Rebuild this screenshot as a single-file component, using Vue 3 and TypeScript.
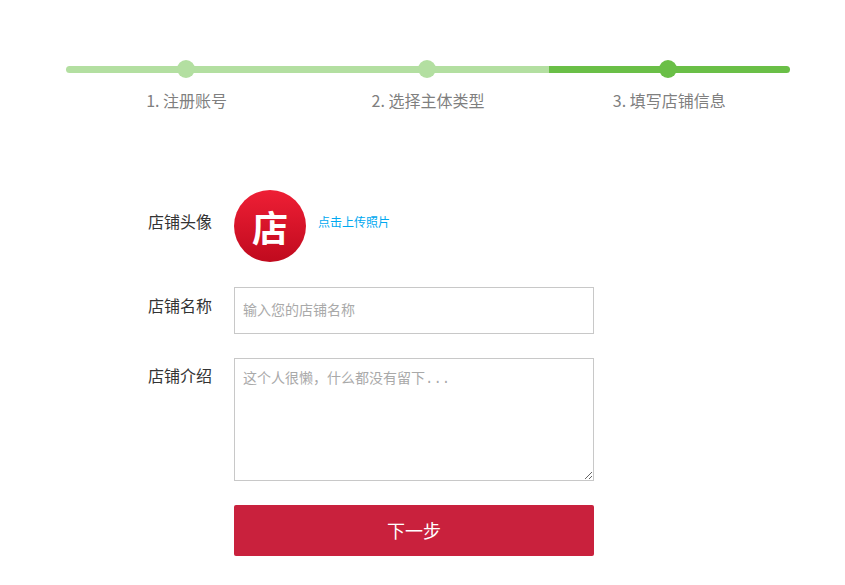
<script setup lang="ts">
interface Step {
  label: string;
  active: boolean;
}

const steps: Step[] = [
  { label: "1. 注册账号", active: false },
  { label: "2. 选择主体类型", active: false },
  { label: "3. 填写店铺信息", active: true },
];
</script>

<template>
  <main class="page">
    <ol class="steps">
      <li v-for="step in steps" :key="step.label" class="step" :class="{ active: step.active }">
        <div class="track"><span class="dot"></span></div>
        <span class="step-label">{{ step.label }}</span>
      </li>
    </ol>

    <form class="shop-form" @submit.prevent>
      <div class="row avatar-row">
        <label class="label">店铺头像</label>
        <div class="avatar">店</div>
        <a class="upload">点击上传照片</a>
      </div>
      <div class="row name-row">
        <label class="label" for="shop-name">店铺名称</label>
        <input id="shop-name" class="field" type="text" placeholder="输入您的店铺名称" />
      </div>
      <div class="row intro-row">
        <label class="label" for="shop-intro">店铺介绍</label>
        <textarea id="shop-intro" class="field area" placeholder="这个人很懒，什么都没有留下..."></textarea>
      </div>
      <button class="next" type="submit">下一步</button>
    </form>
  </main>
</template>

<style scoped>
.page {
  width: 845px;
  height: 585px;
  box-sizing: border-box;
  padding: 60px 55px 0 66px;
  overflow: hidden;
  background: #fff;
  font-family: "Microsoft YaHei", "Noto Sans CJK SC", sans-serif;
}

.steps {
  display: grid;
  grid-template-columns: repeat(3, 1fr);
  margin: 0;
  padding: 0;
  list-style: none;
}

.step {
  display: flex;
  flex-direction: column;
  align-items: center;
  --tone: #b3dfa1;
}

.step.active {
  --tone: #6abf47;
}

.track {
  position: relative;
  width: 100%;
  height: 7px;
  margin: 6px 0;
  background: var(--tone);
}

.step:first-child .track {
  border-radius: 4px 0 0 4px;
}

.step:last-child .track {
  border-radius: 0 4px 4px 0;
}

.dot {
  position: absolute;
  top: -6px;
  left: 50%;
  width: 18px;
  height: 18px;
  margin-left: -10px;
  border-radius: 50%;
  background: var(--tone);
}

.step-label {
  margin-top: 9px;
  font-size: 16px;
  line-height: 24px;
  color: #7f7f7f;
}

.shop-form {
  display: flex;
  flex-direction: column;
  margin: 78px 0 0 82px;
  width: 446px;
}

.row {
  display: flex;
  align-items: flex-start;
}

.label {
  width: 64px;
  margin-right: 22px;
  font-size: 16px;
  line-height: 24px;
  color: #333;
  white-space: nowrap;
}

.avatar-row {
  align-items: center;
  height: 72px;
}

.avatar-row .label {
  padding-bottom: 10px;
}

.avatar {
  width: 72px;
  height: 72px;
  box-sizing: border-box;
  padding-bottom: 12px;
  border-radius: 50%;
  background: linear-gradient(#ee1f35, #c00a1e);
  color: #fff;
  font-size: 36px;
  font-weight: 700;
  line-height: 72px;
  text-align: center;
}

.upload {
  margin-left: 12px;
  padding-bottom: 8px;
  font-size: 12px;
  line-height: 18px;
  color: #00a8f0;
}

.name-row {
  margin-top: 25px;
}

.name-row .label {
  margin-top: 6px;
}

.intro-row {
  margin-top: 24px;
}

.intro-row .label {
  margin-top: 5px;
}

.field {
  display: block;
  width: 360px;
  height: 47px;
  box-sizing: border-box;
  padding: 0 8px 4px;
  border: 1px solid #c8c8c8;
  border-radius: 0;
  outline: none;
  font: inherit;
  font-size: 14px;
  color: #333;
}

.field::placeholder {
  color: #a9a9a9;
  opacity: 1;
}

.area {
  height: 123px;
  padding: 10px 8px 8px;
  font-family: "Liberation Mono", "Noto Sans CJK SC", monospace;
  line-height: 20px;
}

.next {
  width: 360px;
  height: 51px;
  margin: 24px 0 0 86px;
  padding: 0 0 2px;
  border: 0;
  border-radius: 2px;
  background: #c9213d;
  color: #fff;
  font: inherit;
  font-size: 18px;
}
</style>
